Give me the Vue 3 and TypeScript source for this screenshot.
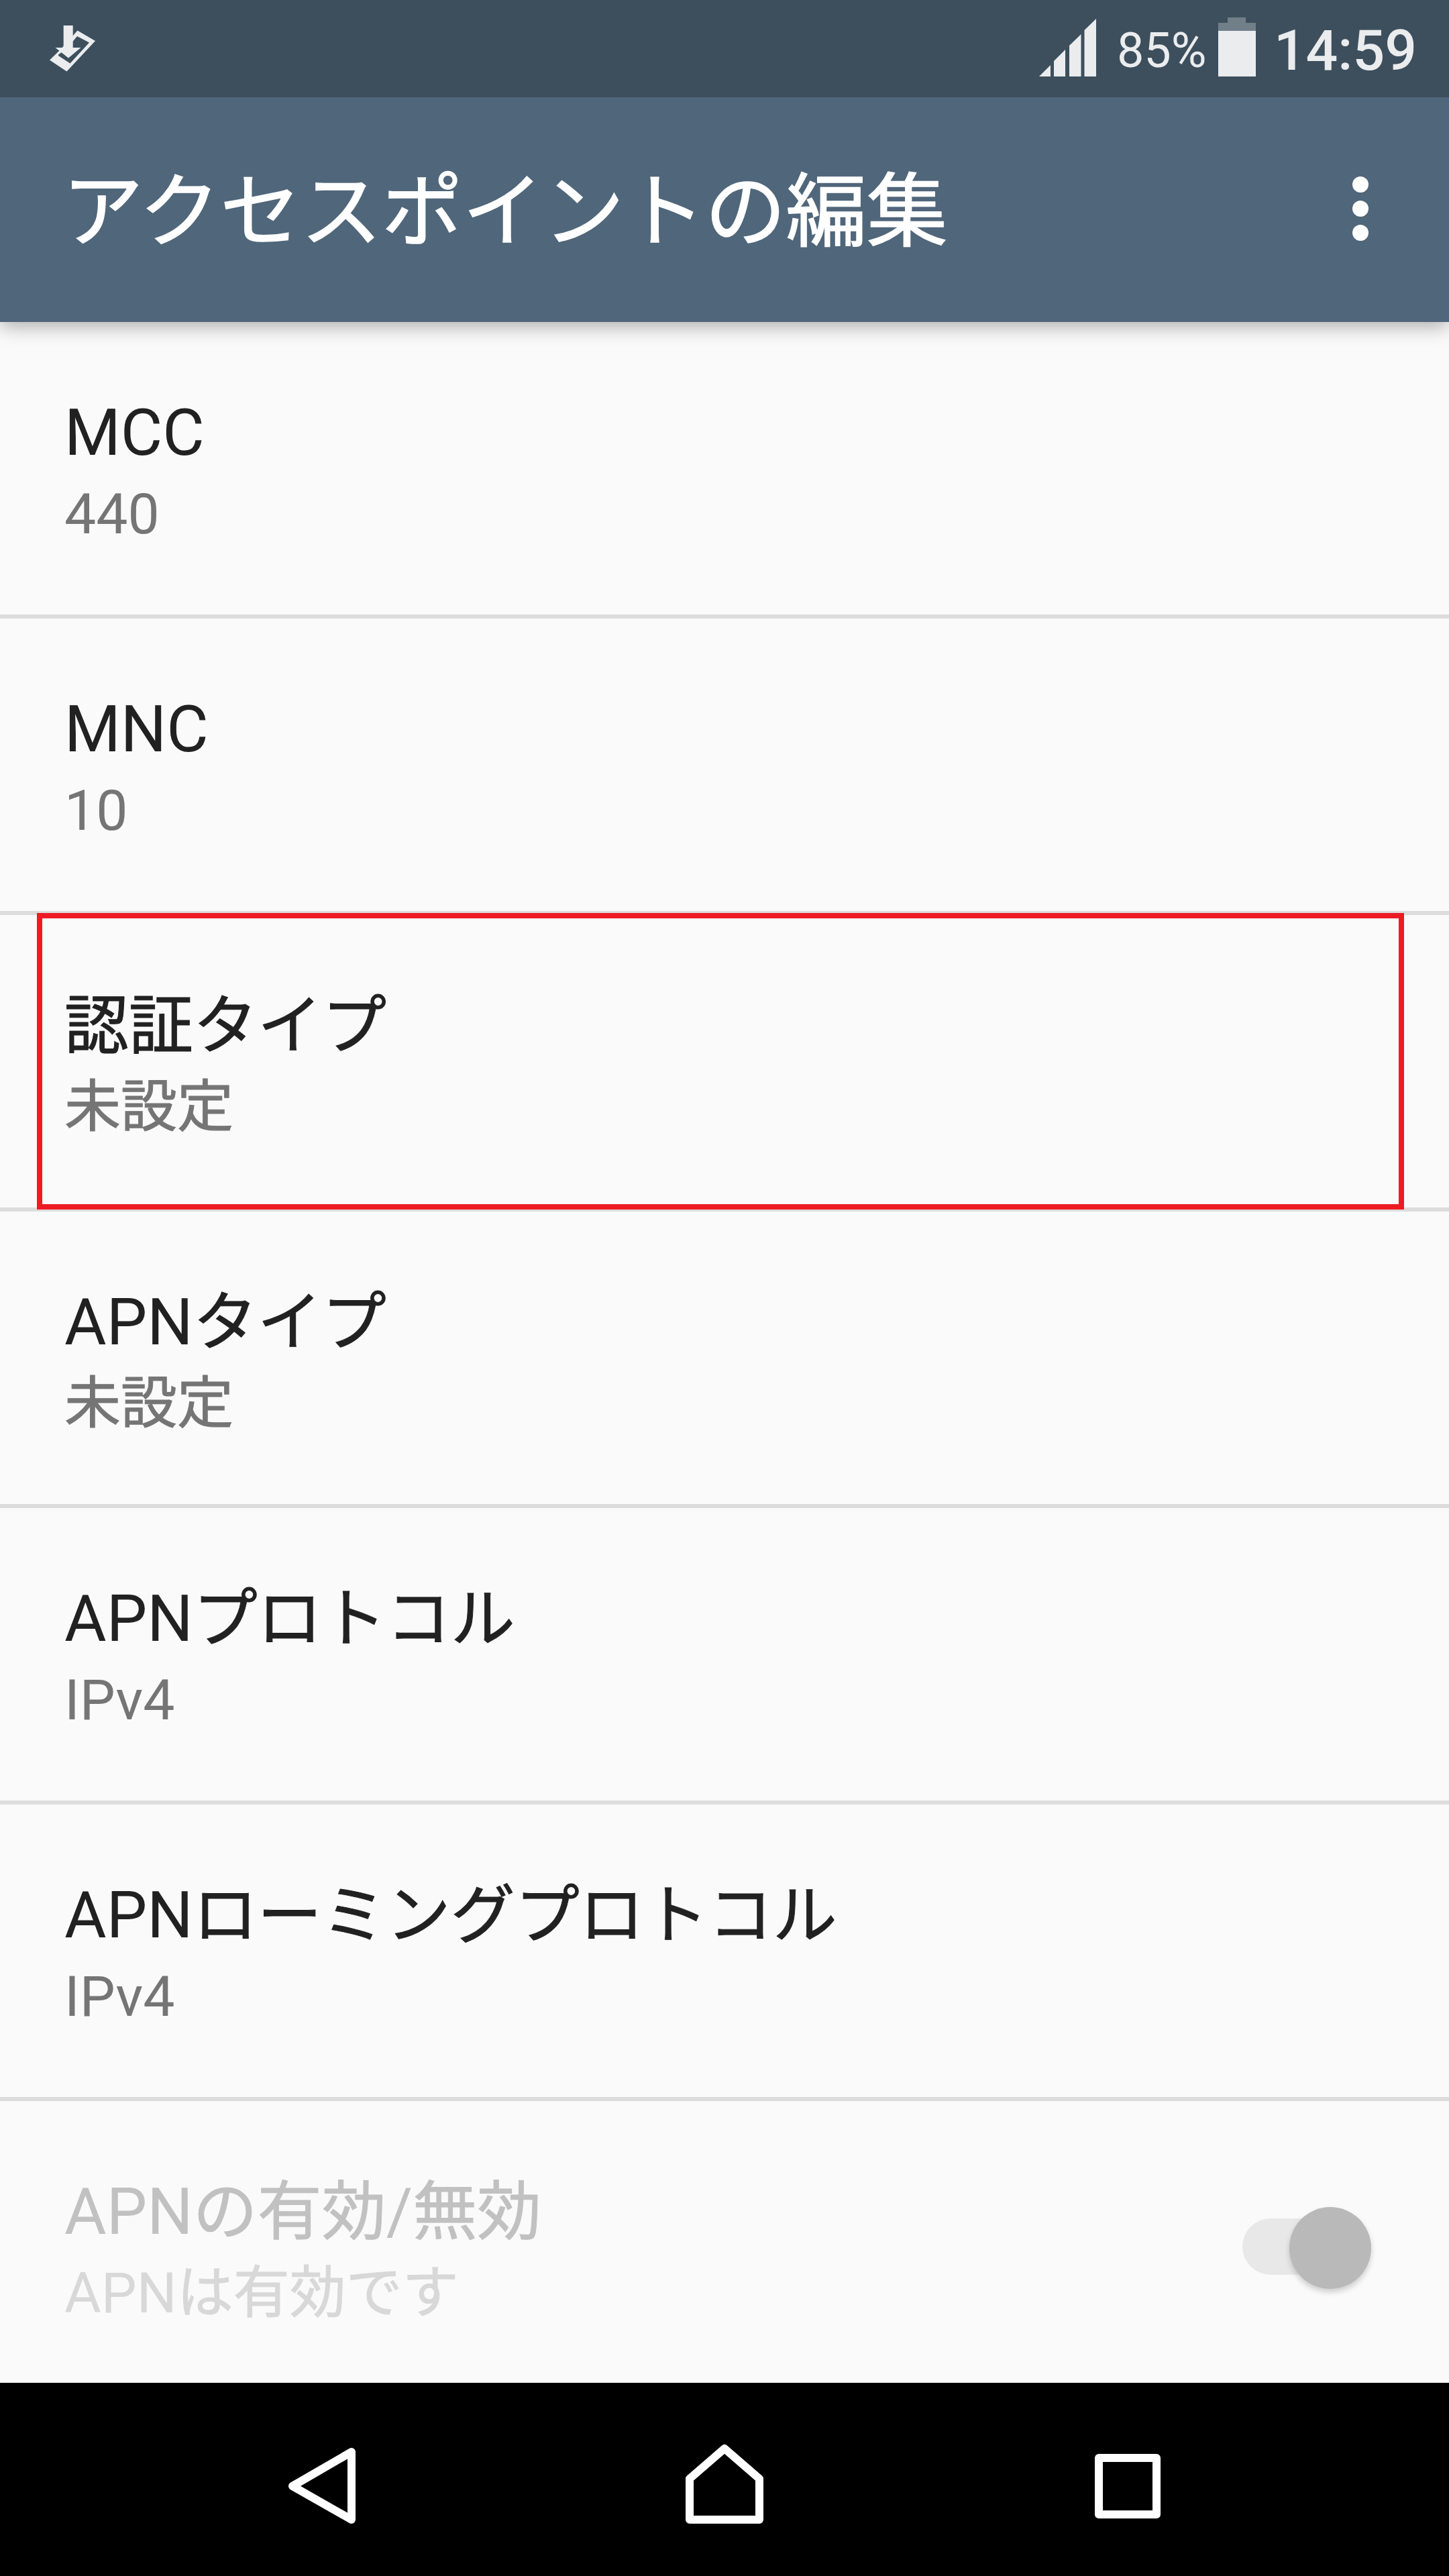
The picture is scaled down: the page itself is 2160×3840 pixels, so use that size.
<script setup lang="ts">
interface Setting {
  title: string
  value: string
  highlighted?: boolean
  disabled?: boolean
}

interface Run {
  text: string
  japanese: boolean
}

const settings: Setting[] = [
  { title: 'MCC', value: '440' },
  { title: 'MNC', value: '10' },
  { title: '認証タイプ', value: '未設定', highlighted: true },
  { title: 'APNタイプ', value: '未設定' },
  { title: 'APNプロトコル', value: 'IPv4' },
  { title: 'APNローミングプロトコル', value: 'IPv4' },
  { title: 'APNの有効/無効', value: 'APNは有効です', disabled: true },
]

// Japanese runs are drawn slightly heavier than the Latin ones.
function runs(text: string): Run[] {
  const parts = text.match(/[\x20-\x7e]+|[^\x20-\x7e]+/g) ?? []
  return parts.map((part) => ({ text: part, japanese: part.charCodeAt(0) > 0x7e }))
}
</script>

<template>
  <div class="screen" lang="ja">
    <div class="status-bar">
      <svg class="download" viewBox="0 0 72 72">
        <path
          fill-rule="evenodd"
          d="M43.5 7.5 70 23 27.5 68.5 2 51.5 16 38 36 16ZM43 16 28 34 15 43.5 15 45 32.5 56.5 61 25.5Z"
        />
        <path d="M22.7 0H36.7V33H48.5L30 48.5 10.5 33H22.7Z" />
      </svg>
      <div class="status-right">
        <svg class="signal" viewBox="0 0 85 86">
          <path d="M0 86 17 69V86ZM22 86V63L39 46V86ZM45 86V40L62.5 23V86ZM67.5 86V17L85 0V86Z" />
        </svg>
        <span class="percent">85%</span>
        <svg class="battery" viewBox="0 0 56 88">
          <path class="battery-empty" d="M14 0H41V8H56V20H0V8H14Z" />
          <path d="M0 20H56V88H0Z" />
        </svg>
        <span class="clock">14:59</span>
      </div>
    </div>

    <header class="app-bar">
      <h1>アクセスポイントの編集</h1>
      <svg class="more" viewBox="0 0 24 96">
        <circle cx="12" cy="12" r="12" />
        <circle cx="12" cy="48" r="12" />
        <circle cx="12" cy="84" r="12" />
      </svg>
    </header>

    <main class="list">
      <section
        v-for="item in settings"
        :key="item.title"
        class="row"
        :class="{ disabled: item.disabled }"
      >
        <div class="texts">
          <div class="title">
            <span v-for="(run, i) in runs(item.title)" :key="i" :class="{ japanese: run.japanese }">{{ run.text }}</span>
          </div>
          <div class="value">
            <span v-for="(run, i) in runs(item.value)" :key="i" :class="{ japanese: run.japanese }">{{ run.text }}</span>
          </div>
        </div>
        <div v-if="item.disabled" class="switch"><div class="thumb"></div></div>
        <div v-if="item.highlighted" class="highlight"></div>
      </section>
    </main>

    <nav class="nav-bar">
      <div class="nav-item">
        <svg viewBox="0 0 144 144">
          <path d="M116 31V132L28 82Z" />
        </svg>
      </div>
      <div class="nav-item">
        <svg viewBox="0 0 144 144">
          <path d="M20 71 72 26 124 71V132H20Z" />
        </svg>
      </div>
      <div class="nav-item">
        <svg viewBox="0 0 144 144">
          <path d="M30 40H116V124.3H30Z" />
        </svg>
      </div>
    </nav>
  </div>
</template>

<style>
body {
  margin: 0;
}
</style>

<style scoped>
.screen {
  display: flex;
  flex-direction: column;
  width: 2160px;
  height: 3840px;
  overflow: hidden;
  background: #fafafa;
  font-family: Roboto, 'Noto Sans CJK JP', sans-serif;
}

.status-bar {
  display: flex;
  flex: none;
  justify-content: space-between;
  box-sizing: border-box;
  height: 145px;
  padding: 0 48px 0 72px;
  background: #3d4f5d;
  color: #ebecee;
}

.status-bar svg {
  flex: none;
  fill: #ebecee;
}

.download {
  width: 72px;
  height: 72px;
  margin-top: 38px;
}

.status-right {
  display: flex;
  align-items: flex-start;
}

.signal {
  width: 85px;
  height: 86px;
  margin: 28px 31px 0 0;
}

.percent {
  width: 134px;
  margin: 34px 17px 0 0;
  font-size: 72px;
  line-height: 84px;
}

.battery {
  width: 56px;
  height: 88px;
  margin: 26px 27px 0 0;
}

.status-bar .battery-empty {
  fill: #717f89;
}

.clock {
  margin-top: 27px;
  font-size: 84px;
  font-weight: 500;
  line-height: 98px;
}

.app-bar {
  position: relative;
  z-index: 1;
  display: flex;
  flex: none;
  align-items: center;
  justify-content: space-between;
  box-sizing: border-box;
  height: 335px;
  padding: 0 120px 0 93px;
  background: #50667a;
  box-shadow: 0 6px 28px rgba(0, 0, 0, 0.32);
  clip-path: inset(0 0 -60px 0);
}

h1 {
  margin: 8px 0 0;
  color: #fff;
  font-size: 120.5px;
  font-weight: 400;
  line-height: 140px;
  -webkit-text-stroke: 1.5px currentColor;
}

.more {
  width: 24px;
  height: 96px;
  margin-top: -3px;
  fill: #fff;
}

.list {
  flex: 1;
  min-height: 0;
  overflow: hidden;
}

.row {
  position: relative;
  display: flex;
  align-items: center;
  justify-content: space-between;
  box-sizing: border-box;
  height: 442px;
  padding: 0 116px 0 96px;
  border-bottom: 6px solid #dcdcdc;
}

.texts {
  padding-top: 9px;
}

.title {
  color: #212121;
  font-size: 96px;
  line-height: 112px;
}

.value {
  margin-top: 17px;
  color: #757575;
  font-size: 84px;
  line-height: 98px;
}

.japanese {
  -webkit-text-stroke: 1px currentColor;
}

.disabled .title {
  color: #c1c1c1;
}

.disabled .value {
  color: #d8d8d8;
}

.switch {
  display: flex;
  align-items: center;
  justify-content: flex-end;
  width: 192px;
  height: 84px;
  margin-top: -2px;
  border-radius: 42px;
  background: #e8e8e8;
}

.thumb {
  flex: none;
  width: 122px;
  height: 122px;
  margin-top: 3px;
  border-radius: 50%;
  background: #b9b9b9;
  box-shadow: 0 5px 8px rgba(0, 0, 0, 0.18);
}

.highlight {
  position: absolute;
  top: -3px;
  left: 55px;
  box-sizing: border-box;
  width: 2038px;
  height: 442px;
  border: 8px solid #ed1c24;
}

.nav-bar {
  display: flex;
  flex: none;
  align-items: center;
  justify-content: center;
  height: 288px;
  background: #000;
}

.nav-item {
  display: flex;
  justify-content: center;
  width: 600px;
}

.nav-item svg {
  width: 144px;
  height: 144px;
  fill: none;
  stroke: #fff;
  stroke-linejoin: round;
  stroke-width: 12px;
}
</style>
